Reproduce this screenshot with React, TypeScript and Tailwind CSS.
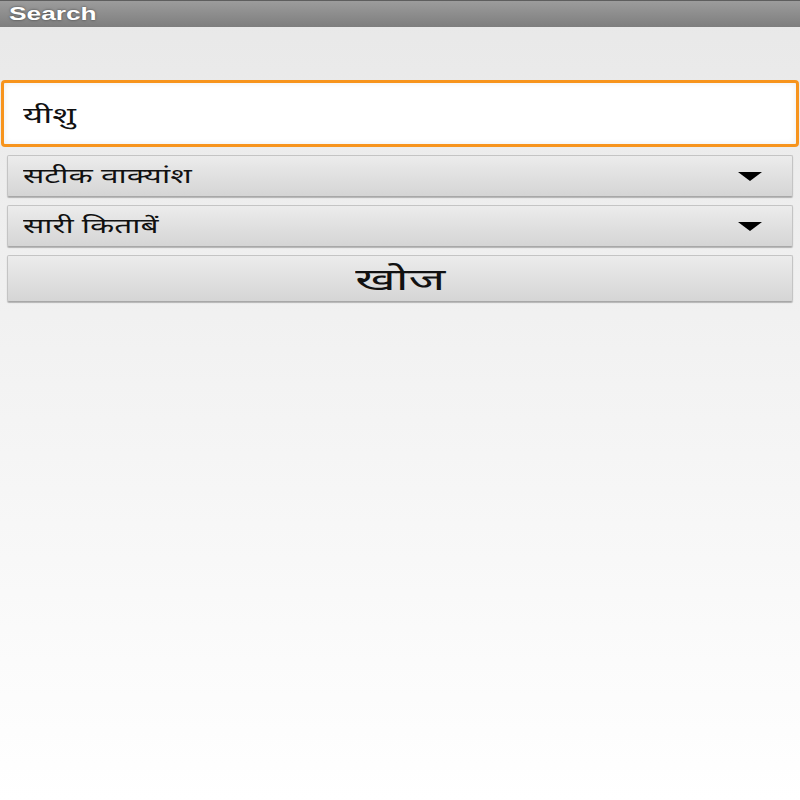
import React from "react";

function Arrow() {
  return (
    <svg width="24" height="9" viewBox="0 0 24 9" className="shrink-0">
      <polygon points="0,0 24,0 12,9" fill="#000" />
    </svg>
  );
}

function Select({ label }: { label: string }) {
  return (
    <div className="mx-[7px] h-[42px] rounded-[2px] border border-[#c4c4c4] border-b-[#a8a8a8] bg-gradient-to-b from-[#ececec] to-[#d5d5d5] shadow-[0_1px_1px_rgba(0,0,0,0.25)] flex items-center justify-between pl-[15px] pr-[30px]">
      <span className="inline-block origin-left scale-x-[1.58] text-[20px] text-[#111] leading-none">{label}</span>
      <Arrow />
    </div>
  );
}

export default function App() {
  return (
    <div className="w-[800px] h-[800px] flex flex-col bg-gradient-to-b from-[#e8e8e8] to-[#ffffff] overflow-hidden font-['Noto_Sans',sans-serif]">
      <div className="h-[27px] bg-gradient-to-b from-[#9c9c9c] to-[#7e7e7e] border-t border-[#5e5e5e] flex items-center pl-[9px]">
        <span className="inline-block origin-left scale-x-[1.46] text-[18px] font-bold text-white leading-none font-['Liberation_Sans',sans-serif] [text-shadow:0_0_2px_rgba(0,0,0,0.6)]">
          Search
        </span>
      </div>
      <div className="h-[53px]" />
      <div className="mx-[1px] h-[67px] rounded-[4px] border-[3px] border-[#f7941d] bg-white flex items-center pl-[19px] shadow-[inset_0_0_6px_rgba(0,0,0,0.08)]">
        <span className="inline-block origin-left scale-x-[1.58] text-[22px] text-[#111] leading-none">यीशु</span>
      </div>
      <div className="h-[8px]" />
      <div className="flex flex-col gap-[8px]">
        <Select label="सटीक वाक्यांश" />
        <Select label="सारी किताबें" />
      </div>
      <div className="h-[8px]" />
      <div className="mx-[7px] h-[47px] rounded-[2px] border border-[#c4c4c4] border-b-[#a8a8a8] bg-gradient-to-b from-[#ececec] to-[#d5d5d5] shadow-[0_1px_1px_rgba(0,0,0,0.25)] flex items-center justify-center">
        <span className="inline-block scale-x-[1.65] text-[30px] text-[#111] leading-none">खोज</span>
      </div>
    </div>
  );
}
